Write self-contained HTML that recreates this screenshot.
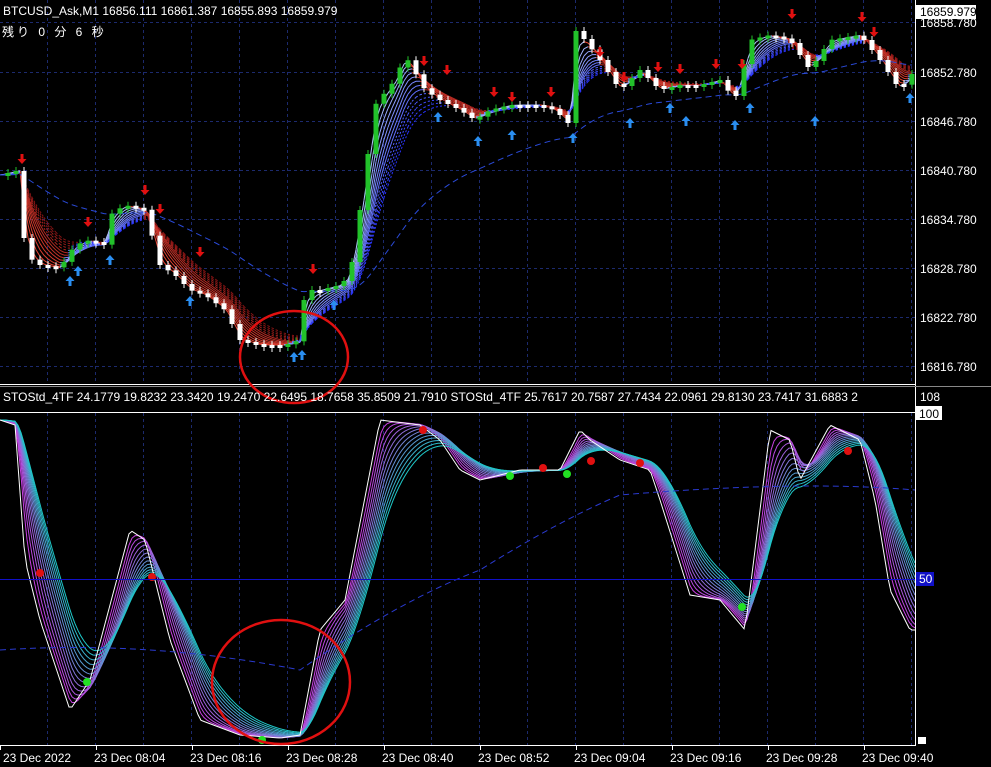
<!DOCTYPE html>
<html><head><meta charset="utf-8"><style>
html,body{margin:0;padding:0;background:#000;width:991px;height:767px;overflow:hidden}
svg{display:block}
text{font-family:"Liberation Sans","Noto Sans CJK JP",sans-serif;font-size:12px;fill:#fff}
</style></head><body>
<svg id="s" width="991" height="767" viewBox="0 0 991 767">
<rect width="991" height="767" fill="#000"/>
<g id="grid" stroke="#1c2a6e" stroke-dasharray="3,3" stroke-width="1"></g>
<g id="main"></g>
<g id="ind"></g>
<line x1="915.5" y1="0" x2="915.5" y2="745" stroke="#fff"/>
<line x1="0" y1="384.5" x2="915" y2="384.5" stroke="#fff"/>
<line x1="0" y1="386.5" x2="991" y2="386.5" stroke="#888"/>
<line x1="0" y1="412.5" x2="915" y2="412.5" stroke="#fff"/>
<line x1="0" y1="745.5" x2="916" y2="745.5" stroke="#fff"/>
<line x1="0" y1="579.5" x2="915" y2="579.5" stroke="#1010c8"/>
<rect x="916" y="572" width="18" height="14" fill="#1010c8"/>
<text x="919" y="583" font-size="11">50</text>
<ellipse cx="294" cy="357" rx="54" ry="46" fill="none" stroke="#e01010" stroke-width="2.5"/>
<ellipse cx="281" cy="682" rx="69" ry="62" fill="none" stroke="#e01010" stroke-width="2.5"/>
<rect x="0" y="0" width="345" height="40" fill="#000" opacity="0"/>
<text x="3" y="15">BTCUSD_Ask,M1  16856.111 16861.387 16855.893 16859.979</text>
<text x="2" y="36" font-size="15" style="letter-spacing:3px">残り 0 分 6 秒</text>
<text x="3" y="401">STOStd_4TF 24.1779 19.8232 23.3420 19.2470 22.6495 18.7658 35.8509 21.7910  STOStd_4TF 25.7617 20.7587 27.7434 22.0961 29.8130 23.7417 31.6883 2</text>
<rect x="916" y="5" width="60" height="14" fill="#fff"/>
<text x="920" y="16" style="fill:#000">16859.979</text>
<text x="920" y="27">16858.780</text>
<text x="920" y="77">16852.780</text>
<text x="920" y="126">16846.780</text>
<text x="920" y="175">16840.780</text>
<text x="920" y="224">16834.780</text>
<text x="920" y="273">16828.780</text>
<text x="920" y="322">16822.780</text>
<text x="920" y="371">16816.780</text>
<text x="920" y="401">108</text>
<rect x="916" y="406" width="26" height="14" fill="#fff"/>
<text x="919" y="418" style="fill:#000">100</text>
<g id="ticks" stroke="#fff"></g>
<text x="3" y="762">23 Dec 2022</text>
<text x="94" y="762">23 Dec 08:04</text>
<text x="190" y="762">23 Dec 08:16</text>
<text x="286" y="762">23 Dec 08:28</text>
<text x="382" y="762">23 Dec 08:40</text>
<text x="478" y="762">23 Dec 08:52</text>
<text x="574" y="762">23 Dec 09:04</text>
<text x="670" y="762">23 Dec 09:16</text>
<text x="766" y="762">23 Dec 09:28</text>
<text x="862" y="762">23 Dec 09:40</text>
<rect x="918" y="737" width="8" height="7" fill="#fff"/>
</svg>
<script>
(function(){
var NS="http://www.w3.org/2000/svg";
function el(p,t,a){var e=document.createElementNS(NS,t);for(var k in a)e.setAttribute(k,a[k]);p.appendChild(e);return e;}
var G=document.getElementById('grid'),M=document.getElementById('main'),I=document.getElementById('ind'),T=document.getElementById('ticks');
[22,72,121,170,219,268,317,366].forEach(function(y){el(G,'line',{x1:0,y1:y+.5,x2:915,y2:y+.5});});
for(var gx=47;gx<915;gx+=48){el(G,'line',{x1:gx+.5,y1:0,x2:gx+.5,y2:384});el(G,'line',{x1:gx+.5,y1:413,x2:gx+.5,y2:745});}
for(var i=0;i<10;i++){var tx=i*96;el(T,'line',{x1:tx+.5,y1:745,x2:tx+.5,y2:750});}
function interp(pts,step){var out=[];for(var x=0;x<=915;x+=step){var done=false;for(var i=1;i<pts.length;i++){if(pts[i][0]>=x){var a=pts[i-1],b=pts[i];var t=(x-a[0])/((b[0]-a[0])||1);out.push([x,a[1]+(b[1]-a[1])*t]);done=true;break;}}if(!done)out.push([x,pts[pts.length-1][1]]);}return out;}
function ema(s,p){var k=2/(p+1),v=s[0][1],o=[];for(var i=0;i<s.length;i++){v=v+(s[i][1]-v)*k;o.push([s[i][0],v]);}return o;}
var P=[[0,175],[20,170],[25,255],[40,265],[60,268],[75,245],[90,240],[105,245],[110,215],[125,205],[145,210],[160,265],[175,275],[190,290],[205,295],[225,310],[240,340],[260,345],[285,345],[300,340],[305,290],[320,290],[340,285],[350,275],[360,210],[375,105],[395,80],[405,55],[425,90],[440,100],[460,110],[475,120],[490,110],[510,105],[540,105],[555,110],[570,125],[575,30],[585,40],[600,60],[620,90],[640,70],[660,90],[680,85],[700,85],[720,80],[735,100],[750,40],[770,35],[790,40],[810,70],[830,40],[860,35],[880,60],[900,90],[915,70]];
var S=interp(P,4);
for(var p=2;p<=14;p++){var e=ema(S,p*1.2);var f=p/14;
 for(var i=1;i<e.length;i++){var up=e[i][1]<e[i-1][1];var col=up?'rgb('+Math.round(200-160*f)+','+Math.round(220-170*f)+',255)':'rgb('+Math.round(255-120*f)+','+Math.round(80-60*f)+','+Math.round(60-40*f)+')';
 el(M,'line',{x1:e[i-1][0],y1:e[i-1][1],x2:e[i][0],y2:e[i][1],stroke:col,'stroke-width':1,'stroke-dasharray':p>9?'2,2':'none'});}}
var sl=ema(S,60);el(M,'path',{d:'M'+sl.map(function(q){return q[0]+','+q[1]}).join(' L'),fill:'none',stroke:'#2a4ad8','stroke-dasharray':'6,4'});
var C=interp(P,8);
for(var i=1;i<C.length;i++){var o=C[i-1][1],cl=C[i][1],cx=C[i][0];var up=cl<o;var bt=Math.min(o,cl),bh=Math.max(3,Math.abs(cl-o));
 var col=up?'#22c22a':'#fff';
 el(M,'line',{x1:cx,y1:bt-4,x2:cx,y2:bt+bh+4,stroke:col});
 el(M,'rect',{x:cx-2.5,y:bt,width:5,height:bh,fill:col});}
function arr(x,y,down){var c=down?'#e01010':'#2a8ef0';if(down)el(M,'path',{d:'M'+(x-1.5)+','+(y-8)+'h3v5h3l-4.5,5l-4.5,-5h3z',fill:c});else el(M,'path',{d:'M'+(x-1.5)+','+(y+8)+'h3v-5h3l-4.5,-5l-4.5,5h3z',fill:c});}
[[22,162],[88,225],[145,193],[160,212],[200,255],[313,272],[424,64],[447,73],[494,95],[512,100],[551,95],[600,55],[624,80],[658,70],[680,72],[716,67],[742,67],[792,17],[862,20],[874,35]].forEach(function(a){arr(a[0],a[1],true)});
[[70,278],[78,268],[110,257],[190,298],[294,354],[302,352],[334,302],[438,114],[478,138],[512,132],[573,135],[630,120],[670,105],[686,118],[735,122],[750,105],[815,118],[910,95]].forEach(function(a){arr(a[0],a[1],false)});
var Q=[[0,420],[15,425],[25,560],[40,620],[70,710],[90,680],[130,530],[145,540],[170,640],[200,720],[240,735],[280,738],[300,735],[320,630],[345,600],[380,420],[420,425],[440,440],[460,470],[480,480],[520,470],[560,470],[580,430],[590,440],[620,460],[650,470],[660,500],[690,595],[720,600],[745,630],[770,430],[790,440],[800,480],[830,425],[860,440],[875,500],[890,590],[910,630],[915,630]];
var R=interp(Q,3);
for(var p=2;p<=14;p++){var e=ema(R,p*1.5);var f=p/14;var col='rgb('+Math.round(230-200*f)+','+Math.round(40+160*f)+','+Math.round(230-30*f)+')';
 el(I,'path',{d:'M'+e.map(function(q){return q[0]+','+q[1]}).join(' L'),fill:'none',stroke:col,'stroke-width':1});}
el(I,'path',{d:'M'+R.map(function(q){return q[0]+','+q[1]}).join(' L'),fill:'none',stroke:'#fff','stroke-width':1});
el(I,'path',{d:'M0,650 Q150,640 300,670 Q400,600 480,570 Q560,520 620,495 Q800,480 915,490',fill:'none',stroke:'#2a3ad0','stroke-dasharray':'6,4'});
[[40,573],[152,577],[423,430],[543,468],[591,461],[640,463],[848,451]].forEach(function(a){el(I,'circle',{cx:a[0],cy:a[1],r:4,fill:'#e01010'})});
[[87,682],[262,740],[510,476],[567,474],[742,607]].forEach(function(a){el(I,'circle',{cx:a[0],cy:a[1],r:4,fill:'#22e022'})});
})();
</script>
</body></html>
